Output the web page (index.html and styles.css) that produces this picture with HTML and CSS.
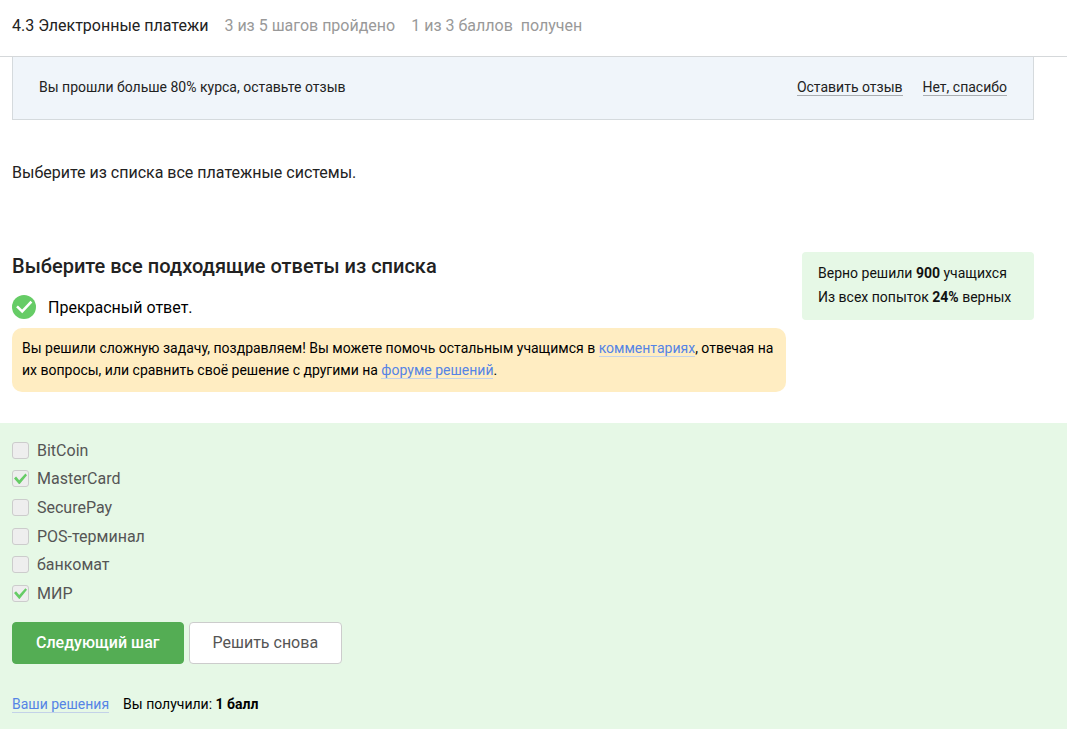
FILE: index.html
```html
<!DOCTYPE html>
<html lang="ru">
<head>
<meta charset="utf-8">
<meta name="viewport" content="width=device-width, initial-scale=1">
<title>4.3 Электронные платежи</title>
<link rel="stylesheet" href="styles.css">
</head>
<body>
<header class="topbar">
  <span class="topbar-title">4.3 Электронные платежи</span>
  <span>3 из 5 шагов пройдено</span>
  <span class="topbar-score"><span>1 из 3 баллов</span><span>получен</span></span>
</header>
<main>
  <div class="content">
    <section class="review">
      <p class="review-text">Вы прошли больше 80% курса, оставьте отзыв</p>
      <button class="review-action" type="button">Оставить отзыв</button>
      <button class="review-action" type="button">Нет, спасибо</button>
    </section>
    <p class="task">Выберите из списка все платежные системы.</p>
    <div class="quiz">
      <section class="quiz-main">
        <h1 class="quiz-title">Выберите все подходящие ответы из списка</h1>
        <p class="result">
          <svg class="result-icon" viewBox="0 0 24 24" aria-hidden="true"><circle cx="12" cy="12" r="12" fill="#66cc66"/><path d="M5 11.4l5.2 5L19.4 6.6" fill="none" stroke="#fff" stroke-width="2.6"/></svg>
          <span class="result-text">Прекрасный ответ.</span>
        </p>
        <p class="hint">Вы решили сложную задачу, поздравляем! Вы можете помочь остальным учащимся в <a class="link" href="#comments">комментариях</a>, отвечая на их вопросы, или сравнить своё решение с другими на <a class="link" href="#solutions">форуме решений</a>.</p>
      </section>
      <aside class="stats">
        <p>Верно решили <b>900</b> учащихся</p>
        <p>Из всех попыток <b>24%</b> верных</p>
      </aside>
    </div>
  </div>
  <section class="attempt">
    <div class="choices">
      <label class="choice"><input class="check" type="checkbox" disabled><span>BitCoin</span></label>
      <label class="choice"><input class="check" type="checkbox" checked disabled><span>MasterCard</span></label>
      <label class="choice"><input class="check" type="checkbox" disabled><span>SecurePay</span></label>
      <label class="choice"><input class="check" type="checkbox" disabled><span>POS-терминал</span></label>
      <label class="choice"><input class="check" type="checkbox" disabled><span>банкомат</span></label>
      <label class="choice"><input class="check" type="checkbox" checked disabled><span>МИР</span></label>
    </div>
    <div class="actions">
      <button class="button button-primary" type="button">Следующий шаг</button>
      <button class="button" type="button">Решить снова</button>
    </div>
    <div class="summary">
      <a class="link" href="#submissions">Ваши решения</a>
      <span>Вы получили: <b>1 балл</b></span>
    </div>
  </section>
</main>
</body>
</html>
```
FILE: styles.css
```css
* {
  box-sizing: border-box;
}

body {
  margin: 0;
  min-height: 100vh;
  display: flex;
  flex-direction: column;
  background: #fff;
  color: #222;
  font: 16px/24px Roboto, "Liberation Sans", sans-serif;
}

main {
  flex: 1;
  display: flex;
  flex-direction: column;
}

p,
h1 {
  margin: 0;
}

button {
  font: inherit;
  cursor: pointer;
}

b {
  font-weight: 700;
}

.topbar {
  display: flex;
  gap: 16px;
  padding: 14px 12px 18px;
  border-bottom: 1px solid #d5d8da;
  color: #999;
}

.topbar-title {
  color: #222;
}

.topbar-score {
  display: flex;
  gap: 8px;
}

.content {
  padding: 0 33px 0 12px;
}

.review {
  display: flex;
  align-items: flex-start;
  gap: 20px;
  padding: 20px 26px 22px;
  border: 1px solid #d5dadd;
  border-top: 0;
  background: #f0f5fa;
  font-size: 14px;
  line-height: 20px;
}

.review-text {
  flex: 1;
}

.review-action {
  margin-top: 2px;
  padding: 0;
  border: 0;
  border-bottom: 1px solid #a9adb1;
  background: none;
  color: #222;
  line-height: 16px;
}

.task {
  padding: 41px 0 67px;
}

.quiz {
  display: flex;
  align-items: flex-start;
  gap: 16px;
}

.quiz-main {
  flex: 1;
}

.quiz-title {
  font-size: 20px;
  font-weight: 500;
  line-height: 28px;
}

.result {
  display: flex;
  align-items: center;
  gap: 12px;
  padding: 15px 0 9px;
  color: #000;
}

.result-icon {
  width: 24px;
  height: 24px;
}

.result-text {
  padding-top: 2px;
  line-height: 22px;
}

.hint {
  padding: 9px 10px 11px;
  border-radius: 10px;
  background: #ffedc2;
  color: #000;
  font-size: 14px;
  line-height: 22px;
}

.link {
  border-bottom: 1px solid #c3d2e8;
  color: #5584e5;
  text-decoration: none;
}

.stats {
  flex: 0 0 232px;
  padding: 9px 12px 11px 16px;
  border-radius: 4px;
  background: #e6f8e6;
  color: #111;
  font-size: 14px;
}

.attempt {
  flex: 1;
  margin-top: 31px;
  padding: 13px 12px 12px;
  background: #e6f8e6;
}

.choices {
  display: grid;
  grid-auto-rows: 1fr;
  justify-items: start;
  min-height: 172px;
}

.choice {
  display: flex;
  align-items: center;
  gap: 8px;
  color: #555;
}

.choice span {
  padding-top: 1px;
}

.check {
  appearance: none;
  width: 17px;
  height: 17px;
  margin: 0;
  border: 1px solid #ccc;
  border-radius: 3px;
  background: #eee;
}

.check:checked {
  display: grid;
  place-items: center;
}

.check:checked::before {
  content: "";
  width: 13px;
  height: 11px;
  background: #66cc66;
  clip-path: polygon(0 45%, 16% 28%, 40% 62%, 88% 0, 100% 15%, 41% 100%);
}

.actions {
  display: flex;
  gap: 5px;
  margin-top: 14px;
}

.button {
  padding: 8px 23px;
  border: 1px solid #ccc;
  border-radius: 4px;
  background: #fff;
  color: #555;
}

.button-primary {
  border-color: #54ad54;
  background: #54ad54;
  color: #fff;
  font-weight: 500;
}

.summary {
  display: flex;
  gap: 14px;
  margin-top: 32px;
  align-items: flex-start;
  color: #000;
  font-size: 14px;
  line-height: 16px;
}
```
